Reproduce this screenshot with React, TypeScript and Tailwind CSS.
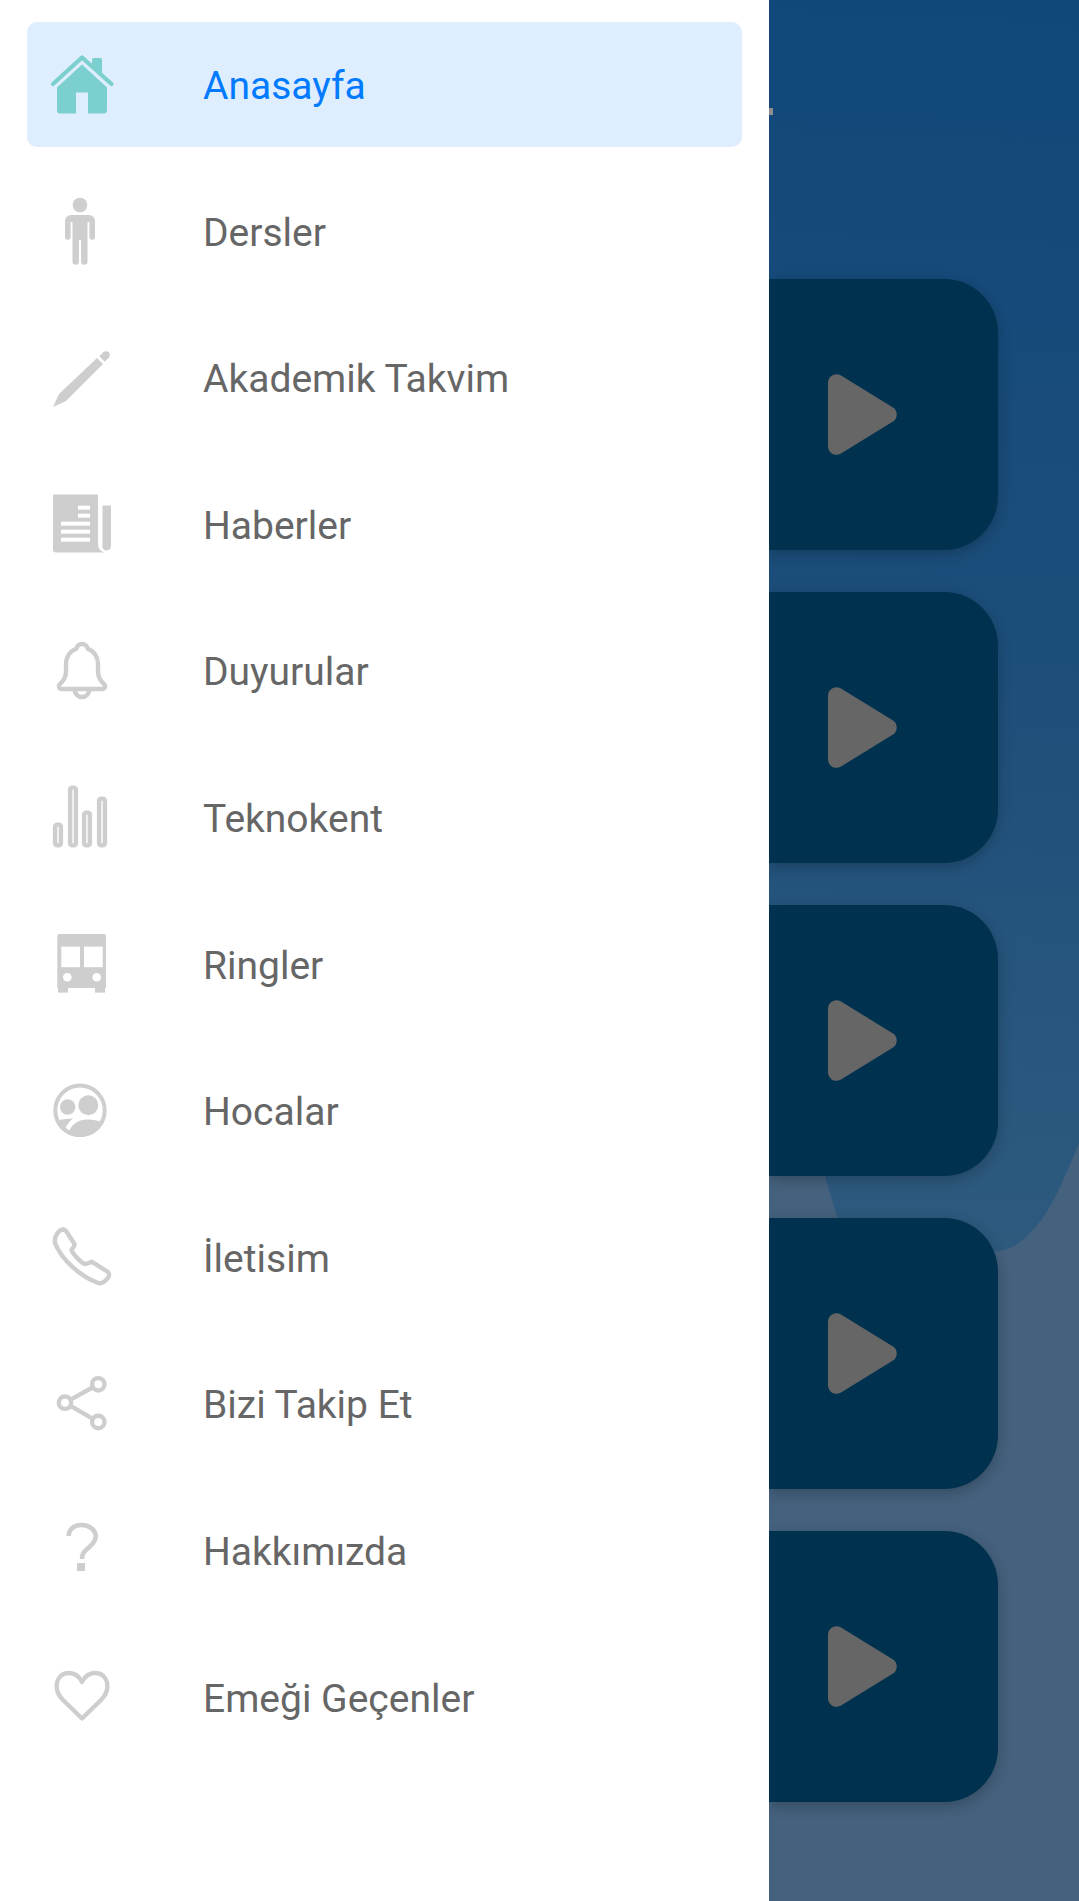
const GRAY = '#cecece';

function IconBox({ children }: { children: React.ReactNode }) {
  return (
    <svg viewBox="0 0 80 80" className="w-20 h-20 shrink-0" fill={GRAY}>
      {children}
    </svg>
  );
}

const Outline = { fill: 'none', stroke: GRAY, strokeWidth: 4.4, strokeLinejoin: 'round', strokeLinecap: 'round' } as const;

function HomeIcon() {
  return (
    <svg viewBox="0 0 80 80" className="w-20 h-20 shrink-0" fill="#7bd0cf">
      <path d="M13 39 42 12.500 71.500 39" fill="none" stroke="#7bd0cf" strokeWidth={4.2} strokeLinecap="round" strokeLinejoin="round" />
      <path d="M52 15a2 2 0 0 1 2-2h6a2 2 0 0 1 2 2v17L52 22z" />
      <path d="M42 19.500 67 42.500v23a3 3 0 0 1-3 3H48V47.500H36v21H20a3 3 0 0 1-3-3v-23z" />
    </svg>
  );
}

function PersonIcon() {
  return (
    <IconBox>
      <circle cx={40} cy={14} r={7.3} />
      <path d="M31 24h18a6 6 0 0 1 6 6v16a2.800 2.800 0 0 1-5.600 0V31H47.500v39.500a3.200 3.200 0 0 1-6.400 0V49h-2.200v21.500a3.200 3.200 0 0 1-6.400 0V31h-1.900v15a2.800 2.800 0 0 1-5.600 0V30a6 6 0 0 1 6-6z" />
    </IconBox>
  );
}

function PenIcon() {
  return (
    <IconBox>
      <path d="M13 69 19 56 57 20 63 26 26 63z" />
      <path d="M62 21 66 17" stroke={GRAY} strokeWidth={7.6} />
      <circle cx={66} cy={17} r={3.8} />
    </IconBox>
  );
}

function NewsIcon() {
  return (
    <IconBox>
      <path d="M13 10.500H58V60c0 4 2 7 6 8.500H16a3 3 0 0 1-3-3z" />
      <path d="M62.500 21.500H71V62a4.500 4.500 0 0 1-8.500 2c0 0 0-2 0-4z" />
      <g fill="#fff">
        <rect x={38} y={21.7} width={12} height={4} />
        <rect x={38} y={29.7} width={12} height={4} />
        <rect x={21} y={37.7} width={29} height={4} />
        <rect x={21} y={45.7} width={29} height={4} />
        <rect x={21} y={53.7} width={29} height={4} />
      </g>
    </IconBox>
  );
}

function BellIcon() {
  return (
    <IconBox>
      <path {...Outline} d="M42 13c3 0 5 2 6 5 6 2 10 8 10 15v7c0 7 3 10 6 13 2 2 1 5-2 5H22c-3 0-4-3-2-5 3-3 6-6 6-13v-7c0-7 4-13 10-15 1-3 3-5 6-5z" />
      <path {...Outline} d="M34.500 58a7.500 8 0 0 0 15 0" />
    </IconBox>
  );
}

function BarsIcon() {
  return (
    <IconBox>
      <g {...Outline}>
        <rect x={15.1} y={47.6} width={5.8} height={20.8} rx={2} />
        <rect x={30.1} y={10.6} width={5.8} height={57.8} rx={2} />
        <rect x={44.1} y={35.6} width={5.8} height={32.8} rx={2} />
        <rect x={59.1} y={21.6} width={5.8} height={46.8} rx={2} />
      </g>
    </IconBox>
  );
}

function BusIcon() {
  return (
    <IconBox>
      <path d="M19.300 10h44.700a2 2 0 0 1 2 2v52H17.300V12a2 2 0 0 1 2-2z" />
      <rect x={18} y={63} width={10} height={5.6} />
      <rect x={55} y={63} width={10} height={5.6} />
      <g fill="#fff">
        <rect x={21.3} y={22.6} width={18.7} height={20.6} />
        <rect x={44} y={22.6} width={18.7} height={20.6} />
        <circle cx={27.3} cy={53.2} r={4.3} />
        <circle cx={56.7} cy={53.2} r={4.3} />
      </g>
    </IconBox>
  );
}

function PeopleIcon() {
  return (
    <IconBox>
      <defs>
        <clipPath id="people-clip">
          <circle cx={40} cy={39.3} r={26.7} />
        </clipPath>
      </defs>
      <circle cx={40} cy={39.3} r={24.7} fill="none" stroke={GRAY} strokeWidth={4} />
      <circle cx={27.7} cy={36} r={7.7} />
      <circle cx={48.3} cy={34.3} r={10} />
      <g clipPath="url(#people-clip)">
        <path d="M28.500 63C30 54 38 48.500 47 48.500c7 0 13 1.500 23 4.500v17H28z" />
        <path d="M10 51.500C18 49 26 47.500 33 47.500c-4 3-7.500 8-9 13.500l-1 9H10z" />
      </g>
    </IconBox>
  );
}

function PhoneIcon() {
  return (
    <IconBox>
      <path {...Outline} d="M15 26C14 20 18 13 23 12.500c2 0 4 2.500 5 4.500l6.500 10c.5 2-2 4-3 6 1.500 4 9.500 13 13.500 14 3 0 5-2 7-2.200L68 55c2 2 1 5-1 7-3 4-7 5-10 3.500C42 60 22 44 15 26z" />
    </IconBox>
  );
}

function ShareIcon() {
  return (
    <IconBox>
      <g {...Outline}>
        <circle cx={58.3} cy={20.3} r={6.2} />
        <circle cx={25} cy={38.7} r={6.2} />
        <circle cx={58.3} cy={58} r={6.2} />
        <path d="M31 35.400 52.500 23.500M31 42.200 52.500 54.700" />
      </g>
    </IconBox>
  );
}

function QuestionIcon() {
  return (
    <IconBox>
      <path d="M28.700 26c0-7 6-11 13-11s14 4.500 14 11.500c0 6-4.500 8.500-8 12-3.500 3-5.700 5-5.700 10.500" fill="none" stroke={GRAY} strokeWidth={4.6} />
      <rect x={37} y={53} width={8} height={8} />
    </IconBox>
  );
}

function HeartIcon() {
  return (
    <IconBox>
      <path {...Outline} d="M42 61.500 23 43C12 32 16 16 29 16c6 0 10 3 13 9 3-6 7-9 13-9 13 0 17 16 6 27z" />
    </IconBox>
  );
}

const menu = [
  { label: 'Anasayfa', icon: HomeIcon, active: true },
  { label: 'Dersler', icon: PersonIcon },
  { label: 'Akademik Takvim', icon: PenIcon },
  { label: 'Haberler', icon: NewsIcon },
  { label: 'Duyurular', icon: BellIcon },
  { label: 'Teknokent', icon: BarsIcon },
  { label: 'Ringler', icon: BusIcon },
  { label: 'Hocalar', icon: PeopleIcon },
  { label: 'İletisim', icon: PhoneIcon },
  { label: 'Bizi Takip Et', icon: ShareIcon },
  { label: 'Hakkımızda', icon: QuestionIcon },
  { label: 'Emeği Geçenler', icon: HeartIcon },
];

function PlayCard() {
  return (
    <div className="h-[271px] bg-[#00324f] rounded-r-[54px] flex items-center pl-[59px] shadow-[0_4px_14px_rgba(0,0,0,0.22)]">
      <svg viewBox="0 0 69 81" className="w-[69px] h-[81px]" fill="#666666">
        <path d="M0 9C0 2 7-2 13 1.500L65 33.500C70 36.500 70 44.500 65 47.500L13 79.500C7 83 0 79 0 72Z" />
      </svg>
    </div>
  );
}

export default function App() {
  return (
    <div className="flex w-[1079px] h-[1901px] overflow-hidden bg-white font-['Roboto',sans-serif]">
      <aside className="relative z-10 w-[769px] shrink-0 bg-white px-[27px] pt-[22px] flex flex-col gap-[21.6px]">
        {menu.map((item) => {
          const Icon = item.icon;
          return (
            <div
              key={item.label}
              className={`h-[125px] shrink-0 flex items-center pl-[13px] rounded-[10px] ${item.active ? 'bg-[#deeeff]' : ''}`}
            >
              <Icon />
              <span className={`ml-[83px] pt-[4px] text-[39px] leading-none ${item.active ? 'text-[#007aff]' : 'text-[#666666]'}`}>
                {item.label}
              </span>
            </div>
          );
        })}
      </aside>
      <main className="relative flex-1 bg-[#44617d] pt-[279px] pr-[81px]">
        <svg viewBox="0 0 310 1901" className="absolute inset-0 w-full h-full">
          <defs>
            <linearGradient id="bg-blue" gradientUnits="userSpaceOnUse" x1="200" y1="0" x2="150" y2="1250">
              <stop offset="0%" stopColor="#11477a" />
              <stop offset="50%" stopColor="#1c4e7a" />
              <stop offset="100%" stopColor="#2e5a7e" />
            </linearGradient>
          </defs>
          <path
            fill="url(#bg-blue)"
            d="M0 0H310V1143C295 1180 280 1215 262 1232 250 1245 240 1252 215 1252H100C80 1252 75 1240 68 1217L56 1176C40 1120 0 1060 0 1060Z"
          />
        </svg>
        <div className="absolute left-0 top-[108px] w-[4px] h-[7px] bg-[#8e8e8e]" />
        <div className="relative flex flex-col gap-[42px]">
          {[0, 1, 2, 3, 4].map((n) => (
            <PlayCard key={n} />
          ))}
        </div>
      </main>
    </div>
  );
}
